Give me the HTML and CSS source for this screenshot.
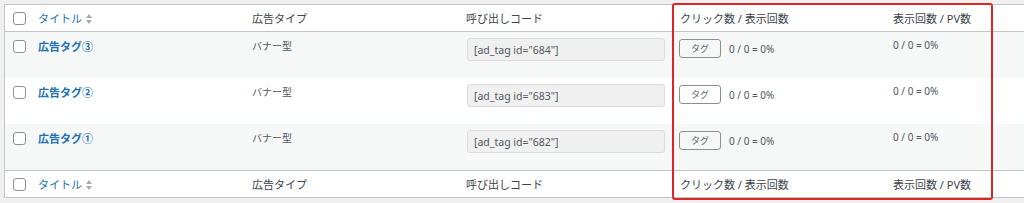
FILE: index.html
```html
<!DOCTYPE html>
<html lang="ja">
<head>
    <meta charset="UTF-8">
    <title>広告タグ一覧</title>
    <link rel="stylesheet" href="styles.css">
</head>
<body>

    <!-- Ad tag list -->
    <div class="wrap">
        <table class="list">
            <thead>
                <tr>
                    <th class="col-cb"><span class="cb"></span></th>
                    <th class="col-title"><a class="sort">タイトル <span class="arrows"><i class="up"></i><i class="down"></i></span></a></th>
                    <th class="col-type">広告タイプ</th>
                    <th class="col-code">呼び出しコード</th>
                    <th class="col-click">クリック数 / 表示回数</th>
                    <th class="col-pv">表示回数 / PV数</th>
                </tr>
            </thead>
            <tbody>
                <tr class="alt">
                    <td class="col-cb"><span class="cb"></span></td>
                    <td class="col-title"><a class="name">広告タグ③</a></td>
                    <td class="col-type">バナー型</td>
                    <td class="col-code"><input class="code" type="text" value='[ad_tag id="684"]' readonly></td>
                    <td class="col-click"><div class="stat"><button class="tag-btn">タグ</button><span>0 / 0 = 0%</span></div></td>
                    <td class="col-pv">0 / 0 = 0%</td>
                </tr>
                <tr>
                    <td class="col-cb"><span class="cb"></span></td>
                    <td class="col-title"><a class="name">広告タグ②</a></td>
                    <td class="col-type">バナー型</td>
                    <td class="col-code"><input class="code" type="text" value='[ad_tag id="683"]' readonly></td>
                    <td class="col-click"><div class="stat"><button class="tag-btn">タグ</button><span>0 / 0 = 0%</span></div></td>
                    <td class="col-pv">0 / 0 = 0%</td>
                </tr>
                <tr class="alt">
                    <td class="col-cb"><span class="cb"></span></td>
                    <td class="col-title"><a class="name">広告タグ①</a></td>
                    <td class="col-type">バナー型</td>
                    <td class="col-code"><input class="code" type="text" value='[ad_tag id="682"]' readonly></td>
                    <td class="col-click"><div class="stat"><button class="tag-btn">タグ</button><span>0 / 0 = 0%</span></div></td>
                    <td class="col-pv">0 / 0 = 0%</td>
                </tr>
            </tbody>
            <tfoot>
                <tr>
                    <th class="col-cb"><span class="cb"></span></th>
                    <th class="col-title"><a class="sort">タイトル <span class="arrows"><i class="up"></i><i class="down"></i></span></a></th>
                    <th class="col-type">広告タイプ</th>
                    <th class="col-code">呼び出しコード</th>
                    <th class="col-click">クリック数 / 表示回数</th>
                    <th class="col-pv">表示回数 / PV数</th>
                </tr>
            </tfoot>
        </table>

        <!-- Highlight frame -->
        <div class="highlight"></div>
    </div>

</body>
</html>
```

FILE: styles.css
```css
/* Reset */
html, body {
    margin: 0;
    padding: 0;
    overflow: hidden;
}

body {
    background-color: #f0f0f1;
    font-family: "Noto Sans", "Noto Sans CJK JP", sans-serif;
    color: #3c434a;
}

.wrap {
    position: relative;
    box-sizing: border-box;
    height: 203px;
    padding: 4px 0 0 4px;
    overflow: hidden;
}

/* Table */
.list {
    width: 1030px;
    border: 1px solid #c3c4c7;
    border-spacing: 0;
    background-color: #fff;
    table-layout: fixed;
}

.list th,
.list td {
    padding: 0 8px;
    text-align: left;
    font-weight: normal;
    white-space: nowrap;
}

.list thead th,
.list tfoot th {
    height: 26px;
    font-size: 11px;
    line-height: 15px;
    color: #3c434a;
    vertical-align: middle;
}

.list thead th {
    border-bottom: 1px solid #c3c4c7;
}

.list tfoot th {
    border-top: 1px solid #c3c4c7;
}

.list tbody tr {
    height: 46px;
}

.list td {
    padding-top: 7px;
    vertical-align: top;
    font-size: 10px;
    line-height: 15px;
    color: #50575e;
}

.list tr.alt td {
    background-color: #f6f7f7;
}

/* Columns */
.col-cb { width: 9px; }
.col-title { width: 198px; }
.col-type { width: 198px; }
.col-code { width: 198px; }
.col-click { width: 197px; }

/* Checkbox */
.cb {
    display: block;
    width: 11px;
    height: 11px;
    border: 1px solid #8c8f94;
    border-radius: 3px;
    background: #fff;
}

.list td.col-cb {
    padding-top: 8px;
}

/* Title column */
.sort {
    color: #2271b1;
}

.arrows {
    display: inline-flex;
    flex-direction: column;
    gap: 2px;
    vertical-align: middle;
    margin-left: 1px;
    margin-top: -2px;
}

.arrows i {
    display: block;
    width: 0;
    height: 0;
    border-left: 3px solid transparent;
    border-right: 3px solid transparent;
}

.arrows .up {
    border-bottom: 4px solid #a7aaad;
}

.arrows .down {
    border-top: 4px solid #a7aaad;
}

.name {
    color: #2271b1;
    font-weight: bold;
    font-size: 11px;
}

/* Shortcode input */
.list td.col-code {
    padding-top: 6px;
}

.code {
    display: block;
    box-sizing: border-box;
    width: 198px;
    height: 23px;
    margin: 0 0 0 1px;
    padding: 0 6px;
    border: 1px solid #dcdcde;
    border-radius: 3px;
    background-color: #f0f0f1;
    font-family: "Noto Sans", "Noto Sans CJK JP", sans-serif;
    font-size: 10.5px;
    color: #50575e;
}

/* Click stats */
.list td.col-click {
    padding-top: 6px;
}

.stat {
    display: flex;
    align-items: center;
    gap: 8px;
    padding-top: 1px;
}

.stat span {
    padding-top: 2px;
}

.tag-btn {
    box-sizing: border-box;
    width: 42px;
    height: 19px;
    margin-left: -1px;
    padding: 0;
    border: 1px solid #8c8f94;
    border-radius: 3px;
    background: transparent;
    font-family: "Noto Sans CJK JP", sans-serif;
    font-size: 9px;
    color: #646970;
}

.list td.col-pv {
    padding-top: 6px;
}

/* Red highlight frame */
.highlight {
    position: absolute;
    left: 672px;
    top: 3px;
    bottom: 3px;
    width: 321px;
    box-sizing: border-box;
    border: 2px solid #df2426;
    border-radius: 3px;
    pointer-events: none;
}
```
